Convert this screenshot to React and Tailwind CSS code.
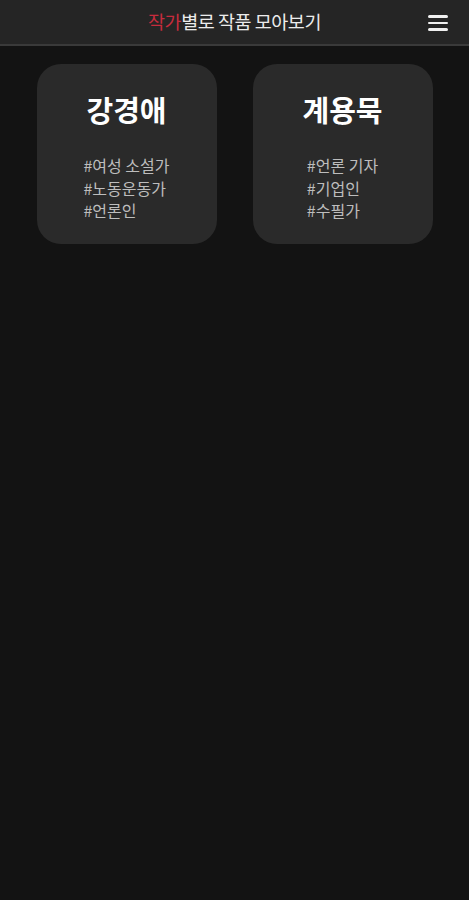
const authors = [
    { name: '강경애', tags: ['#여성 소설가', '#노동운동가', '#언론인'] },
    { name: '계용묵', tags: ['#언론 기자', '#기업인', '#수필가'] },
];

export default function App() {
    return (
        <div className="min-h-[900px] bg-[#131313] font-['Noto_Sans_CJK_KR','Noto_Sans',sans-serif]">
            <header className="relative h-[46px] bg-[#252525] border-b-2 border-[#3a3a3a] flex items-center justify-center">
                <h1 className="text-[18.5px] text-[#ececec] tracking-tight">
                    <span className="text-[#c62c3d]">작가</span>별로 작품 모아보기
                </h1>
                <button className="absolute right-[21px] top-[15px] flex flex-col gap-[4px]">
                    <span className="block w-[20px] h-[2.5px] bg-[#f0f0f0] rounded-sm" />
                    <span className="block w-[20px] h-[2.5px] bg-[#f0f0f0] rounded-sm" />
                    <span className="block w-[20px] h-[2.5px] bg-[#f0f0f0] rounded-sm" />
                </button>
            </header>
            <main className="flex justify-center gap-[36px] pt-[18px]">
                {authors.map((a) => (
                    <div key={a.name} className="w-[180px] h-[180px] rounded-[24px] bg-[#2a2a2a] flex flex-col items-center pt-[26px]">
                        <h2 className="text-[29px] leading-[38px] font-bold text-white">{a.name}</h2>
                        <ul className="mt-[26px] text-[16px] leading-[22.5px] text-[#bdbdbd]">
                            {a.tags.map((t) => (
                                <li key={t}>{t}</li>
                            ))}
                        </ul>
                    </div>
                ))}
            </main>
        </div>
    );
}
